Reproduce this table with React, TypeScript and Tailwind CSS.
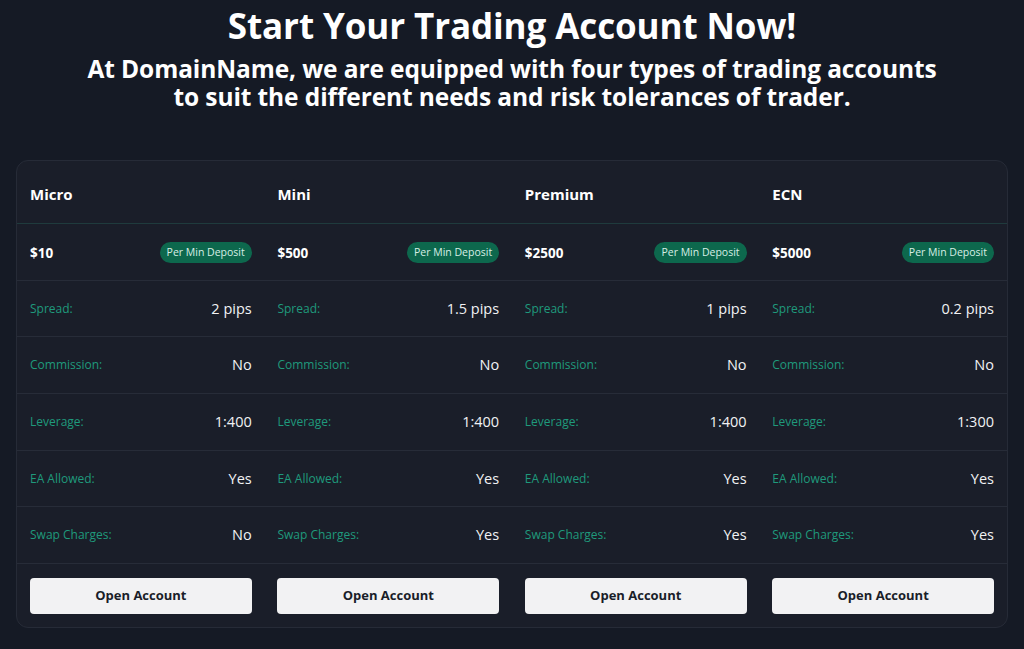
const accounts = [
  { name: 'Micro', deposit: '$10', spread: '2 pips', commission: 'No', leverage: '1:400', ea: 'Yes', swap: 'No' },
  { name: 'Mini', deposit: '$500', spread: '1.5 pips', commission: 'No', leverage: '1:400', ea: 'Yes', swap: 'Yes' },
  { name: 'Premium', deposit: '$2500', spread: '1 pips', commission: 'No', leverage: '1:400', ea: 'Yes', swap: 'Yes' },
  { name: 'ECN', deposit: '$5000', spread: '0.2 pips', commission: 'No', leverage: '1:300', ea: 'Yes', swap: 'Yes' },
]

type Key = 'spread' | 'commission' | 'leverage' | 'ea' | 'swap'

const specs: { label: string; key: Key }[] = [
  { label: 'Spread:', key: 'spread' },
  { label: 'Commission:', key: 'commission' },
  { label: 'Leverage:', key: 'leverage' },
  { label: 'EA Allowed:', key: 'ea' },
  { label: 'Swap Charges:', key: 'swap' },
]

const row = 'grid grid-cols-4 gap-x-[25.7px] px-[13px]'

export default function App() {
  return (
    <div className="min-h-[649px] w-full bg-[#151a25] font-['Open_Sans',sans-serif] text-white">
      <div className="flex flex-col items-center pt-[3px] text-center">
        <h1 className="text-[35px] font-bold leading-[46px] tracking-[-0.1px]">Start Your Trading Account Now!</h1>
        <p className="mt-[6px] text-[24.5px] font-bold leading-[28px] tracking-[-0.1px]">
          At DomainName, we are equipped with four types of trading accounts
          <br />
          to suit the different needs and risk tolerances of trader.
        </p>
      </div>

      <div className="mx-[16px] mt-[49px] overflow-hidden rounded-[12px] border border-[#262b37] bg-[#1a1e29]">
        {/* Names */}
        <div className={`${row} h-[63px] items-center border-b border-[#1f3b3d] pt-[4px]`}>
          {accounts.map((a) => (
            <div key={a.name} className="text-[15px] font-bold">
              {a.name}
            </div>
          ))}
        </div>

        {/* Deposit */}
        <div className={`${row} h-[56.7px] items-center border-b border-[#272c38] pt-[2px]`}>
          {accounts.map((a) => (
            <div key={a.name} className="flex items-center justify-between">
              <span className="text-[13.5px] font-bold">{a.deposit}</span>
              <span className="rounded-full bg-[#0d684d] px-[7px] py-[3px] text-[10.5px] leading-[15px] text-[#d7eee6]">
                Per Min Deposit
              </span>
            </div>
          ))}
        </div>

        {specs.map((s) => (
          <div key={s.key} className={`${row} h-[56.7px] items-center border-b border-[#272c38]`}>
            {accounts.map((a) => (
              <div key={a.name} className="flex items-center justify-between">
                <span className="text-[12px] text-[#1f9a7c]">{s.label}</span>
                <span className="text-[14.5px] font-medium text-[#f1f2f4]">{a[s.key]}</span>
              </div>
            ))}
          </div>
        ))}

        {/* Buttons */}
        <div className={`${row} pt-[14px] pb-[13px]`}>
          {accounts.map((a) => (
            <button
              key={a.name}
              className="h-[36px] rounded-[4px] bg-[#f2f2f3] text-[13px] font-bold text-[#1a1e29]"
            >
              Open Account
            </button>
          ))}
        </div>
      </div>
    </div>
  )
}
